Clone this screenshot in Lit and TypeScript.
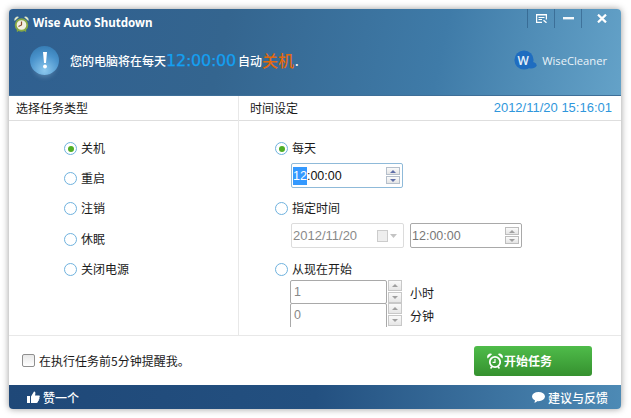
import { LitElement, html, css } from "lit";
import { customElement } from "lit/decorators.js";

@customElement("app-root")
export class AppRoot extends LitElement {
  static styles = css`
    :host { display: block; width: 631px; height: 418px; background: #fff; overflow: hidden;
      font-family: "Noto Sans CJK SC", sans-serif; font-size: 12px; color: #1a1a1a; }
    .page { padding: 9px 10px 9px 9px; }
    .win { width: 612px; height: 400px; border-radius: 4px; overflow: hidden; background: #fff;
      box-shadow: 0 0 7px rgba(0,0,0,.4); display: flex; flex-direction: column; }
    .head { height: 87px; box-sizing: border-box; position: relative; color: #fff;
      background: linear-gradient(102deg, #2f5f90 0%, #34658f 35%, #3f7ba8 70%, #64a2c8 100%);
      border-bottom: 1px solid #3e6f98; }
    .titlebar { display: flex; align-items: center; height: 28px; padding-left: 5px; gap: 4px; }
    .logo { margin-top: 2px; }
    .title { font: bold 11.6px "Noto Sans", sans-serif; margin-top: -1px; }
    .ctrls { margin-left: auto; display: flex; height: 19px; align-self: flex-start; }
    .ctrl { width: 27px; height: 19px; border-left: 1px solid rgba(30,70,110,.45); display: flex; align-items: center; justify-content: center; box-sizing: border-box; }
    .ctrl.x { width: 40px; }
    .msg { display: flex; align-items: center; padding-left: 21px; height: 34px; margin-top: 6px; }
    .orb { width: 29px; height: 29px; border-radius: 50%; margin-right: 11px; flex: none;
      background: radial-gradient(circle at 50% 85%, #8cc8ee, #4a93cc 55%, #2f74ab);
      box-shadow: 0 6px 5px -4px rgba(160,200,230,.35);
      display: flex; align-items: center; justify-content: center; }
    .msg-text { font-size: 12px; font-weight: 500; white-space: nowrap; display: flex; align-items: center; }
    .t { color: #14a0f2; font: 16px "DejaVu Sans", sans-serif; margin: 0 2px 0 0; letter-spacing: -.25px; -webkit-text-stroke: .25px #14a0f2; }
    .k { color: #e2690e; font-size: 16px; margin: 0 1px 0 0; }
    .brand { position: absolute; right: 14px; top: 41px; display: flex; align-items: center; gap: 5px; font: 11.2px "Open Sans", sans-serif; color: #eaf3f9; }
    .body { flex: none; height: 239px; display: grid; grid-template-columns: 230px 1fr; border-bottom: 1px solid #e8e8e8; }
    .left { border-right: 1px solid #e8e8e8; }
    .colhead { height: 25px; box-sizing: border-box; border-bottom: 1px solid #dedede; display: flex; align-items: center; justify-content: space-between; padding: 0 9px 1px 7px; }
    .right .colhead { padding-left: 11px; }
    .now { color: #2f97dc; font: 13px "Liberation Sans", sans-serif; }
    .types { display: flex; flex-direction: column; gap: 15.2px; padding: 20px 0 0 55px; }
    .radio-row { display: flex; align-items: center; gap: 4px; height: 15px; line-height: 15px; white-space: nowrap; }
    .radio-row .lbl { margin-bottom: 2px; }
    .radio { width: 13px; height: 13px; box-sizing: border-box; border: 1.5px solid #6fb2de; border-radius: 50%; background: #fff; display: flex; align-items: center; justify-content: center; flex: none; }
    .radio.on::after { content: ""; width: 6px; height: 6px; border-radius: 50%; background: #4fae25; }
    .right { overflow: hidden; }
    .sched { padding: 20px 0 0 36px; height: 206px; overflow: hidden; box-sizing: border-box; }
    .field { box-sizing: border-box; height: 25px; border: 1px solid #a9a9a9; border-radius: 2px; display: flex; align-items: center; padding: 0 2px 0 1px; font: 12.5px "Liberation Sans", sans-serif; background: #fff; }
    .time { width: 112px; margin: 7px 0 0 16px; border-color: #8fbad9; color: #111; }
    .sel { background: #3399ff; color: #fff; padding: 2px 0; }
    .gap { margin-top: 13px; }
    .gap2 { margin-top: 14px; }
    .line { display: flex; gap: 6px; margin: 7px 0 0 16px; }
    .date { width: 113px; border-color: #dcdcdc; color: #8a8a8a; font-size: 13px; }
    .clock2 { width: 112px; color: #777; }
    .spin { margin-left: auto; display: flex; flex-direction: column; gap: 1px; }
    .spin i { display: flex; align-items: center; justify-content: center; width: 14px; height: 8px; box-sizing: border-box; background: linear-gradient(#fbfbfb,#e4e4e4); border: 1px solid #bdbdbd; }
    .time .spin i { border-color: #b5bfcb; }
    .tri-u { width: 0; height: 0; border: 3px solid transparent; border-top: 0; border-bottom: 3px solid #a0a0a0; }
    .tri-d { width: 0; height: 0; border: 3px solid transparent; border-bottom: 0; border-top: 3px solid #a0a0a0; }
    .time .tri-u { border-bottom-color: #5f6fa8; }
    .time .tri-d { border-top-color: #5f6fa8; }
    .num-row { display: flex; margin-left: 15px; height: 23px; align-items: flex-start; }
    .num { width: 97px; height: 24px; color: #888; padding-left: 3px; }
    .num.cut { height: 30px; align-items: flex-start; padding-top: 4px; }
    .num-spin { display: flex; flex-direction: column; gap: 1px; margin-left: 1px; }
    .num-spin i { display: flex; align-items: center; justify-content: center; width: 14px; height: 11px; box-sizing: border-box; background: linear-gradient(#fafafa,#e6e6e6); border: 1px solid #c8c8c8; }
    .unit { margin: 4px 0 0 8px; }
    .nums { margin-top: 3px; }
    .bottom { height: 49px; display: flex; align-items: center; justify-content: space-between; padding: 0 29px 0 13px; box-sizing: border-box; }
    .chk { display: flex; align-items: center; gap: 4px; }
    .box { width: 13px; height: 13px; box-sizing: border-box; border: 1px solid #8f8f8f; border-radius: 2px; background: linear-gradient(#e8e8e8,#fff); }
    .go { width: 118px; height: 30px; border-radius: 3px; box-sizing: border-box; background: linear-gradient(#4fbc4a,#35912f); color: #fff; display: flex; align-items: center; padding-left: 13px; gap: 1px; font-weight: 700; font-size: 12px; }
    .foot { flex: 1; display: flex; align-items: center; justify-content: space-between; color: #fff; padding: 0 13px 0 18px;
      background: linear-gradient(90deg, #1f4878 0%, #235080 50%, #4d8ab5 100%); font-weight: 500; }
    .foot span { display: flex; align-items: center; gap: 3px; }
  `;

  private spin() {
    return html`<div class="spin"><i><b class="tri-u"></b></i><i><b class="tri-d"></b></i></div>`;
  }
  private numSpin() {
    return html`<div class="num-spin"><i><b class="tri-u"></b></i><i><b class="tri-d"></b></i></div>`;
  }

  render() {
    const types = ["关机", "重启", "注销", "休眠", "关闭电源"];
    return html`<div class="page"><div class="win">
      <div class="head">
        <div class="titlebar">
          <svg class="logo" width="15" height="16" viewBox="0 0 15 16">
            <path d="M.6 5 A3.2 3.2 0 0 1 5 1 Z M14.4 5 A3.2 3.2 0 0 0 10 1 Z" fill="#dfe8c8"/>
            <circle cx="7.5" cy="9" r="5.8" fill="#f2efe2" stroke="#86a845" stroke-width="1.9"/>
            <path d="M7.5 5.5 L7.5 9 L4.5 10.5" fill="none" stroke="#8a4a2a" stroke-width="1.2"/>
            <path d="M3 15.5 L4.5 13.5 M12 15.5 L10.5 13.5" stroke="#86a845" stroke-width="1.4"/>
          </svg>
          <div class="title">Wise Auto Shutdown</div>
          <div class="ctrls">
            <div class="ctrl"><svg width="11" height="9" viewBox="0 0 11 9"><path d="M0 0H11V1.6H0ZM0 0H1.2V9H0ZM0 7.8H6V9H0ZM9.8 0H11V5.5H9.8ZM2.5 3H8.5V4H2.5ZM2.5 5H6V6H2.5Z" fill="#fff"/><path d="M7.5 6.2L10.5 8.8" stroke="#fff" stroke-width="1.3"/></svg></div>
            <div class="ctrl"><svg width="11" height="3" viewBox="0 0 11 3"><rect width="11" height="2.4" fill="#f4f8fb"/></svg></div>
            <div class="ctrl x"><svg width="10" height="9" viewBox="0 0 10 9"><path d="M1 .6L9 8.4M9 .6L1 8.4" stroke="#fff" stroke-width="2.2"/></svg></div>
          </div>
        </div>
        <div class="msg">
          <div class="orb"><svg width="6" height="17" viewBox="0 0 6 17"><path d="M1 0H5L4 11H2Z" fill="#fff"/><circle cx="3" cy="14.5" r="1.9" fill="#fff"/></svg></div>
          <div class="msg-text">您的电脑将在每天<span class="t">12:00:00</span>自动<span class="k">关机</span>.</div>
        </div>
        <div class="brand">
          <svg width="23" height="21" viewBox="0 0 23 21">
            <circle cx="10" cy="10" r="9.6" fill="#1f6dc0"/>
            <ellipse cx="17" cy="15.2" rx="5.6" ry="3.4" fill="#1f6dc0"/>
            <text x="3.5" y="14.5" font-family="Open Sans" font-size="12" font-weight="600" fill="#e8f2fb">W</text>
          </svg>
          WiseCleaner
        </div>
      </div>
      <div class="body">
        <div class="left">
          <div class="colhead">选择任务类型</div>
          <div class="types">
            ${types.map((t, i) => html`<div class="radio-row"><span class="radio ${i === 0 ? "on" : ""}"></span><span class="lbl">${t}</span></div>`)}
          </div>
        </div>
        <div class="right">
          <div class="colhead"><span>时间设定</span><span class="now">2012/11/20 15:16:01</span></div>
          <div class="sched">
            <div class="radio-row"><span class="radio on"></span><span class="lbl">每天</span></div>
            <div class="field time"><span class="sel">12</span>:00:00${this.spin()}</div>
            <div class="radio-row gap"><span class="radio"></span><span class="lbl">指定时间</span></div>
            <div class="line">
              <div class="field date">2012/11/20
                <svg style="margin-left:auto;margin-right:4px" width="20" height="12" viewBox="0 0 20 12"><rect x=".5" y=".5" width="10" height="11" fill="#eee" stroke="#ccc"/><path d="M13 4H20L16.5 8Z" fill="#c4c4c4"/></svg>
              </div>
              <div class="field clock2">12:00:00${this.spin()}</div>
            </div>
            <div class="radio-row gap2"><span class="radio"></span><span class="lbl">从现在开始</span></div>
            <div class="nums">
              <div class="num-row"><div class="field num">1</div>${this.numSpin()}<span class="unit">小时</span></div>
              <div class="num-row"><div class="field num cut">0</div>${this.numSpin()}<span class="unit">分钟</span></div>
            </div>
          </div>
        </div>
      </div>
      <div class="bottom">
        <div class="chk"><span class="box"></span>在执行任务前5分钟提醒我。</div>
        <div class="go">
          <svg width="16" height="16" viewBox="0 0 16 16">
            <path d="M.6 5.4 A3.3 3.3 0 0 1 5.2 1 Z M15.4 5.4 A3.3 3.3 0 0 0 10.8 1 Z" fill="#fff"/>
            <circle cx="8" cy="9" r="5.2" fill="none" stroke="#fff" stroke-width="1.8"/>
            <path d="M8 6 V9.4 H5.6" fill="none" stroke="#fff" stroke-width="1.2"/>
            <path d="M3.6 15.5 L5 13.5 M12.4 15.5 L11 13.5" stroke="#fff" stroke-width="1.5"/>
          </svg>
          开始任务
        </div>
      </div>
      <div class="foot">
        <span><svg width="13" height="12" viewBox="0 0 13 12"><rect x="0" y="5" width="3" height="7" fill="#fff"/><path d="M4 5.5L7 .5C8.5.5 8.8 2 8 4.5H12.2C13 4.5 13 6 12.3 6.5C12.8 7.5 12.3 8.2 11.8 8.5C12 9.5 11.5 10 11 10.3C11 11.5 10.3 12 9.5 12H4Z" fill="#fff"/></svg> 赞一个</span>
        <span><svg width="13" height="11" viewBox="0 0 13 11"><ellipse cx="6.5" cy="4.6" rx="6.5" ry="4.6" fill="#fff"/><path d="M3 8L2.5 11L6.5 8.5Z" fill="#fff"/></svg> 建议与反馈</span>
      </div>
    </div></div>`;
  }
}
